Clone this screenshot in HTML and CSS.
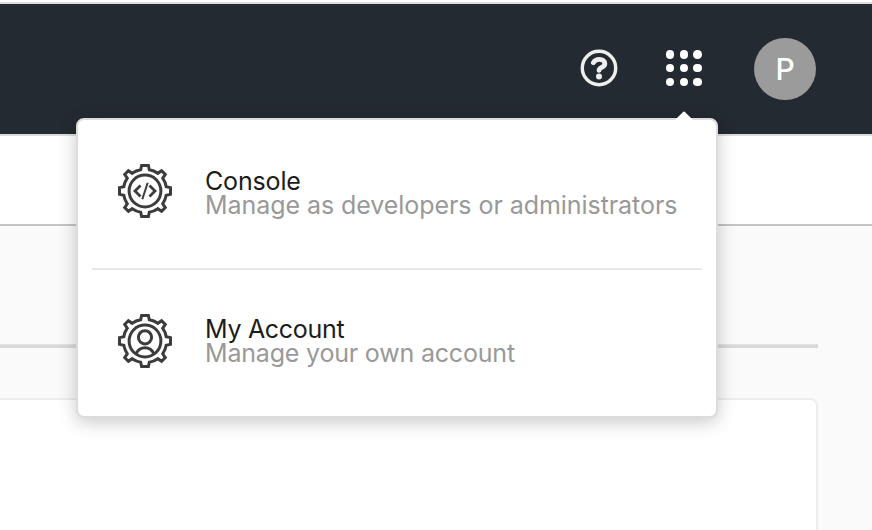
FILE: index.html
```html
<!DOCTYPE html>
<html lang="en">
<head>
<meta charset="utf-8">
<title>Console</title>
<link rel="stylesheet" href="styles.css">
</head>
<body>
<svg class="defs" aria-hidden="true">
  <defs>
    <g id="gear">
      <path d="M-4.3-21.2L-3.4-25.5H3.4L4.3-21.2Q9-20.4 12.8-17.7L16.6-20.3L20.3-16.6L17.7-12.8Q20.4-9 21.2-4.3L25.5-3.4V3.4L21.2 4.3Q20.4 9 17.7 12.8L20.3 16.6L16.6 20.3L12.8 17.7Q9 20.4 4.3 21.2L3.4 25.5H-3.4L-4.3 21.2Q-9 20.4-12.8 17.7L-16.6 20.3L-20.3 16.6L-17.7 12.8Q-20.4 9-21.2 4.3L-25.5 3.4V-3.4L-21.2-4.3Q-20.4-9-17.7-12.8L-20.3-16.6L-16.6-20.3L-12.8-17.7Q-9-20.4-4.3-21.2Z"/>
      <circle r="15.9"/>
    </g>
  </defs>
</svg>
<header class="topbar">
  <svg class="help" viewBox="0 0 38 38">
    <circle cx="19" cy="19" r="16.7"/>
    <path d="M13.4 13.7C14.7 11.3 17 10.4 19.3 10.4C22.8 10.4 24.8 12.1 24.8 14.7C24.8 18.4 19.3 18.2 19.1 21.2"/>
    <circle class="dot" cx="19" cy="27.4" r="3"/>
  </svg>
  <div class="apps">
    <i></i><i></i><i></i><i></i><i></i><i></i><i></i><i></i><i></i>
  </div>
  <div class="avatar">P</div>
  <nav class="menu">
    <svg class="arrow" viewBox="0 0 18 9"><path d="M0 9L7.8 1.2Q9-.2 10.2 1.2L18 9Z"/></svg>
    <a class="item">
      <svg class="icon" viewBox="-28 -28 56 56">
        <use href="#gear"/>
        <path class="thin" d="M-4.5-5.4L-10 0L-4.5 5.4M4.5-5.4L10 0L4.5 5.4"/>
        <path class="slash" d="M2.7-8.3L-2.7 8.3"/>
      </svg>
      <span class="text"><span class="title console">Console</span><span class="desc developers">Manage as developers or administrators</span></span>
    </a>
    <a class="item">
      <svg class="icon" viewBox="-28 -28 56 56">
        <use href="#gear"/>
        <circle cy="-3.7" r="6.6"/>
        <path d="M-9 12.8C-7.2 9-4 6.8 0 6.8S7.2 9 9 12.8"/>
      </svg>
      <span class="text"><span class="title account">My Account</span><span class="desc own">Manage your own account</span></span>
    </a>
  </nav>
</header>
<div class="subbar"></div>
<main class="content">
  <div class="tabs"></div>
  <section class="card"></section>
</main>
</body>
</html>
```
FILE: styles.css
```css
* { box-sizing: border-box; }
body {
  margin: 0;
  padding-top: 2px;
  height: 530px;
  overflow: hidden;
  background: #fff;
  font-family: Inter, "Liberation Sans", sans-serif;
}
.defs { position: absolute; width: 0; height: 0; }
.topbar {
  position: relative;
  height: 134px;
  display: flex;
  align-items: flex-start;
  justify-content: flex-end;
  padding: 34px 56px 0 0;
  background: #242a31;
  border-top: 2px solid #dddddf;
  border-bottom: 2px solid #dcdcde;
}
.help {
  width: 38px;
  height: 38px;
  margin: 11px 47.6px 0 0;
  fill: none;
  stroke: #eee;
  stroke-width: 3.4;
}
.help path { stroke-width: 4.9; stroke-linecap: round; }
.help .dot { fill: #eee; stroke: none; }
.apps {
  display: grid;
  grid-template-columns: repeat(3, 8.6px);
  gap: 5.2px;
  margin: 12px 52px 0 0;
}
.apps i { width: 8.6px; height: 8.6px; border-radius: 50%; background: #fff; }
.avatar {
  width: 62px;
  height: 62px;
  border-radius: 50%;
  background: #9b9b9b;
  color: #fff;
  font-size: 30px;
  font-weight: 500;
  line-height: 63px;
  text-align: center;
}
.menu {
  position: absolute;
  z-index: 1;
  left: 76px;
  top: 114px;
  width: 642px;
  height: 300px;
  padding: 0 14px;
  background: #fff;
  border: 2px solid #dcdcdc;
  border-radius: 8px;
  box-shadow: 0 4px 18px rgba(0, 0, 0, .22);
}
.arrow {
  position: absolute;
  left: 597px;
  top: -9px;
  width: 18px;
  height: 9px;
  fill: #fff;
}
.item {
  display: flex;
  height: 148px;
  padding: 43px 0 0 25px;
}
.item + .item { border-top: 2px solid #e8e8e8; }
.icon {
  width: 56px;
  height: 56px;
  fill: none;
  stroke: #3c3c3f;
  stroke-width: 3;
}
.icon .thin { stroke-width: 2.8; }
.icon .slash { stroke-width: 2; }
.text {
  padding: 6px 0 0 32px;
  white-space: nowrap;
  font-size: 25px;
  line-height: 24px;
}
.item + .item .text { padding-top: 4px; }
.title { display: block; color: #1c1c1c; }
.desc { display: block; color: #999; }
.console { letter-spacing: -.15px; }
.developers { letter-spacing: -.06px; }
.account { letter-spacing: -.3px; }
.own { letter-spacing: -.19px; }
.subbar {
  height: 90px;
  background: #fff;
  border-bottom: 2px solid #c4c4c4;
}
.content {
  height: 304px;
  padding: 118px 54px 0 0;
  background: #fafafa;
}
.tabs {
  height: 4px;
  margin-bottom: 50px;
  background: #d9d9d9;
  border-top: 1px solid #e2e2e2;
}
.card {
  height: 150px;
  background: #fff;
  border: 2px solid #ededed;
  border-left: 0;
  border-radius: 0 8px 0 0;
}
```
